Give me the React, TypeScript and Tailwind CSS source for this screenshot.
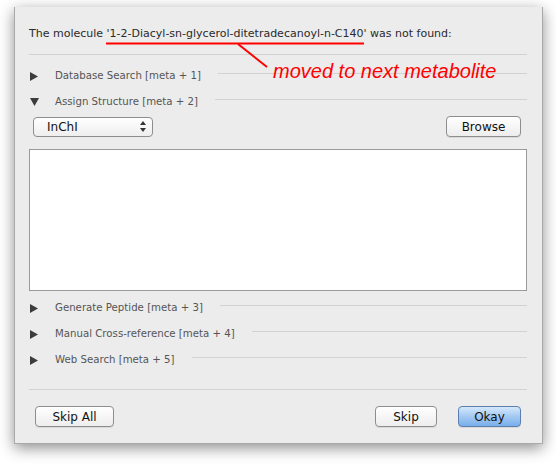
import React from 'react';

const font = { fontFamily: '"DejaVu Sans", "Liberation Sans", sans-serif' };

const Tri = ({ open }: { open?: boolean }) =>
  open ? (
    <svg width="9" height="8" viewBox="0 0 9 8" className="shrink-0">
      <polygon points="0,0 9,0 4.5,8" fill="#3c3c3c" />
    </svg>
  ) : (
    <svg width="8" height="9" viewBox="0 0 8 9" className="shrink-0">
      <polygon points="0,0 8,4.5 0,9" fill="#3c3c3c" />
    </svg>
  );

const Section = ({ label, open }: { label: string; open?: boolean }) => (
  <div className="flex h-[26px] items-center">
    <div className="flex w-[26px] justify-start pl-[1px]">
      <Tri open={open} />
    </div>
    <span className="whitespace-nowrap text-[10.2px] text-[#555555]">{label}</span>
    <div className="mb-[5px] ml-[17px] h-px flex-1 bg-[#d2d2d2]" />
  </div>
);

const Btn = ({ children, w, primary }: { children: React.ReactNode; w: string; primary?: boolean }) => (
  <button
    className={
      primary
        ? `${w} h-[21px] rounded-[4px] border border-[#5c7fb0] bg-gradient-to-b from-[#d5e8fc] via-[#a3c9f3] to-[#78aeeb] text-[12px] text-[#111] shadow-[0_1px_0_rgba(0,0,0,0.08)]`
        : `${w} h-[21px] rounded-[4px] border border-[#8e8e8e] bg-gradient-to-b from-white to-[#ededed] text-[12px] text-[#111] shadow-[0_1px_0_rgba(0,0,0,0.08)]`
    }
  >
    {children}
  </button>
);

export default function App() {
  return (
    <div className="h-[464px] w-[556px] overflow-hidden bg-white" style={font}>
      <div className="relative ml-[14px] mt-[7px] h-[437px] w-[529px] border-x border-b border-[#a9a9a9] bg-[#ececec] shadow-[0_4px_14px_rgba(0,0,0,0.45)]">
        <div className="pl-[14px] pr-[15px] pt-[20px]">
          <p className="h-[14px] whitespace-nowrap text-[11px] leading-[14px] text-[#2a2a2a]">
            The molecule '1-2-Diacyl-sn-glycerol-ditetradecanoyl-n-C140' was not found:
          </p>
          <div className="mt-[13px] h-px bg-[#d2d2d2]" />
          <div className="mt-[8px]">
            <Section label="Database Search [meta + 1]" />
            <Section label="Assign Structure [meta + 2]" open />
          </div>
          <div className="mt-[1px] flex items-center justify-between pl-[4px] pr-[6px]">
            <div className="flex h-[20px] w-[120px] items-center justify-between rounded-[4px] border border-[#8e8e8e] bg-gradient-to-b from-white to-[#eeeeee] pl-[13px] pr-[6px] text-[12px] text-[#111]">
              <span>InChI</span>
              <svg width="6" height="11" viewBox="0 0 6 11">
                <polygon points="0,4 6,4 3,0" fill="#333" />
                <polygon points="0,7 6,7 3,11" fill="#333" />
              </svg>
            </div>
            <Btn w="w-[75px]">Browse</Btn>
          </div>
          <div className="mt-[12px] h-[142px] border border-[#9a9a9a] bg-white" />
          <div className="mt-[4px]">
            <Section label="Generate Peptide [meta + 3]" />
            <Section label="Manual Cross-reference [meta + 4]" />
            <Section label="Web Search [meta + 5]" />
          </div>
          <div className="mt-[16px] h-px bg-[#d2d2d2]" />
          <div className="mt-[16px] flex items-center pl-[6px] pr-[6px]">
            <Btn w="w-[79px]">Skip All</Btn>
            <div className="flex-1" />
            <Btn w="w-[62px]">Skip</Btn>
            <div className="w-[21px]" />
            <Btn w="w-[63px]" primary>
              Okay
            </Btn>
          </div>
        </div>

        {/* annotation overlay */}
        <svg className="pointer-events-none absolute left-0 top-0" width="529" height="437">
          <line x1="91" y1="36.5" x2="349" y2="36.5" stroke="#ff0000" strokeWidth="2" />
          <line x1="223" y1="37" x2="252" y2="60" stroke="#ff0000" strokeWidth="2" />
        </svg>
        <span
          className="absolute left-[258px] top-[52px] whitespace-nowrap text-[20px] italic leading-[24px] text-[#ff0000]"
          style={{ fontFamily: '"Liberation Sans", Arial, sans-serif' }}
        >
          moved to next metabolite
        </span>
      </div>
    </div>
  );
}
